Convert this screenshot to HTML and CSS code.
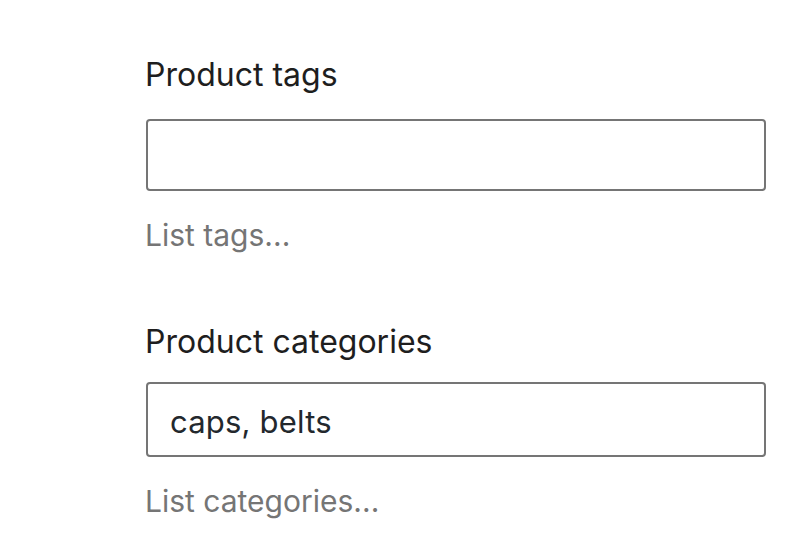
FILE: index.html
```html
<!DOCTYPE html>
<html lang="en">
<head>
<meta charset="utf-8">
<link rel="stylesheet" href="styles.css">
<title>Product fields</title>
</head>
<body>
<div class="form">
  <div class="field">
    <label class="label" for="tags">Product tags</label>
    <input class="input" id="tags" type="text" value="">
    <p class="help">List tags...</p>
  </div>
  <div class="field field-filled">
    <label class="label" for="cats">Product categories</label>
    <input class="input" id="cats" type="text" value="caps, belts">
    <p class="help">List categories...</p>
  </div>
</div>
</body>
</html>
```
FILE: styles.css
```css
html, body {
  margin: 0;
  padding: 0;
  background: #ffffff;
}
body {
  font-family: Inter, "Liberation Sans", sans-serif;
  width: 800px;
  height: 560px;
  overflow: hidden;
}
.form {
  padding: 55px 0 0 146px;
  display: flex;
  flex-direction: column;
  gap: 69px;
}
.field {
  display: flex;
  flex-direction: column;
  width: 620px;
}
.label {
  font-size: 32px;
  line-height: 40px;
  color: #1e1e1e;
  margin: 0 0 24px -1px;
}
.input {
  box-sizing: border-box;
  width: 620px;
  height: 72px;
  margin: 0;
  border: 2px solid #757575;
  border-radius: 4px;
  padding: 4px 22px 0;
  font-family: inherit;
  font-size: 31px;
  letter-spacing: 0.2px;
  color: #23282d;
  background: #fff;
  outline: none;
}
.field-filled .label {
  margin-bottom: 20px;
}
.field-filled .input {
  height: 75px;
}
.help {
  margin: 26px 0 0 -1px;
  font-size: 30px;
  line-height: 36px;
  letter-spacing: 0;
  color: #757575;
}
```
